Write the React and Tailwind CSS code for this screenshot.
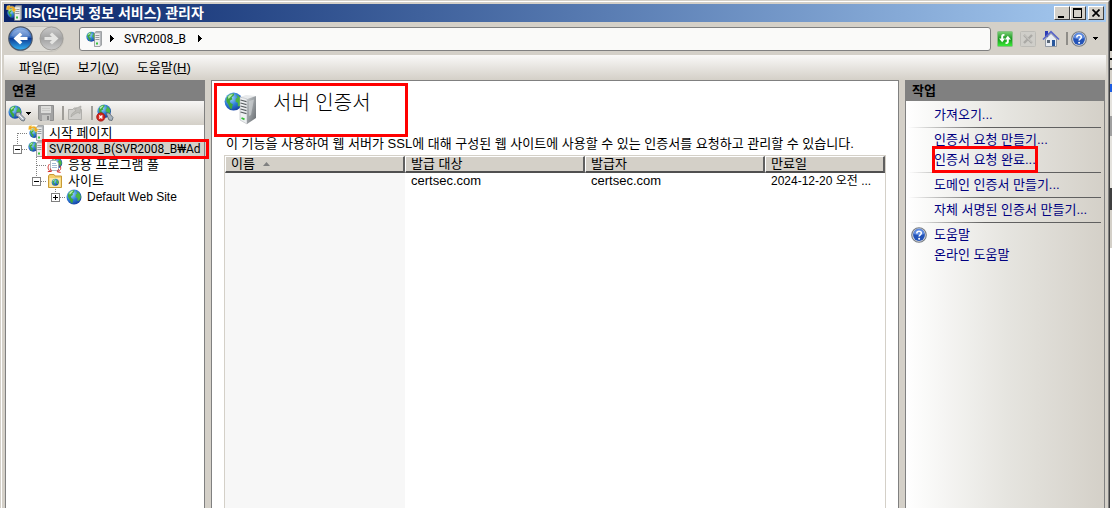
import React from 'react';

/* ---------- Icons ---------- */

const SvgDefs = () => (
    <svg width="0" height="0" className="absolute" aria-hidden="true">
        <defs>
            <radialGradient id="globeBlue" cx="0.35" cy="0.3" r="0.8">
                <stop offset="0" stopColor="#a6dcff" />
                <stop offset="0.5" stopColor="#2f7ed8" />
                <stop offset="1" stopColor="#10379a" />
            </radialGradient>
            <linearGradient id="towerSide" x1="0" y1="0" x2="1" y2="1">
                <stop offset="0" stopColor="#c4c8cb" />
                <stop offset="0.5" stopColor="#969b9f" />
                <stop offset="1" stopColor="#64696d" />
            </linearGradient>
            <linearGradient id="backBlue" x1="0" y1="0" x2="0" y2="1">
                <stop offset="0" stopColor="#8fb4ea" />
                <stop offset="0.45" stopColor="#2c62b8" />
                <stop offset="0.5" stopColor="#0b3c96" />
                <stop offset="1" stopColor="#35b4f4" />
            </linearGradient>
            <linearGradient id="forwardGray" x1="0" y1="0" x2="0" y2="1">
                <stop offset="0" stopColor="#c9c9c9" />
                <stop offset="0.5" stopColor="#a2a2a2" />
                <stop offset="1" stopColor="#cbcbcb" />
            </linearGradient>
            <linearGradient id="refreshGreen" x1="0" y1="0" x2="0" y2="1">
                <stop offset="0" stopColor="#7fd07a" />
                <stop offset="0.5" stopColor="#17961c" />
                <stop offset="1" stopColor="#3df03a" />
            </linearGradient>
        </defs>
    </svg>
);

// Drawn on a 16 unit grid, reused inside the bigger icons
const GlobeShape = () => (
    <g>
        <circle cx="8" cy="8" r="7.5" fill="url(#globeBlue)" />
        <path d="M3 3.5 C5 1.2 7.5 1 8.5 1.4 L8 3.2 L6.4 4.4 L7 6 L4.8 7.2 L5.4 9.2 L7.4 10.2 L6.2 14.6 C4.4 13.4 4.2 11 3 9.4 C1.6 8 1.6 5.4 3 3.5Z" fill="#3fa83c" />
        <path d="M10 2 C13.4 3.4 15 6 14.8 8.6 L13.2 11.6 L11.4 12 L11.6 9.2 L9.6 8 L9.8 5.6 L11.4 4.6Z" fill="#4cb545" />
        <path d="M3.2 4 C4.6 2 6.4 1.6 7.4 2 L5.6 4 L3.8 5.8Z" fill="#b5ecae" />
    </g>
);

const Globe = () => (
    <svg width="16" height="16" viewBox="0 0 16 16" className="shrink-0">
        <GlobeShape />
    </svg>
);

const LargeServerIcon = () => (
    <svg width="33" height="34" viewBox="0 0 33 34" className="shrink-0">
        <g transform="translate(0 1) scale(1.2)">
            <GlobeShape />
        </g>
        <path d="M16 6 L22 4 L32 5 L23 8Z" fill="#e8eaec" />
        <path d="M16 6 L23 8 L23 33 L16 29Z" fill="#eef0f2" stroke="#a9adb1" strokeWidth="0.5" />
        <path d="M23 8 L32 5 L32 27 L23 33Z" fill="url(#towerSide)" />
        <path d="M25 10 L30 8.4 L27 24 L25 25Z" fill="#d5d8da" opacity="0.6" />
        <path d="M16.5 9 L22.5 10.6 M16.5 12 L22.5 13.6 M16.5 15 L22.5 16.6 M16.5 18 L22.5 19.6 M16.5 21 L22.5 22.6" stroke="#5b6064" strokeWidth="1.1" />
        <path d="M17.5 27 L20.5 28.4" stroke="#35c03a" strokeWidth="1.8" />
    </svg>
);

// Front view tower for the 16px icons
const SmallTower = () => (
    <g>
        <path d="M8.5 2 L10 0.6 H15.5 V14 L14 15.5 H8.5Z" fill="#b4b7ba" stroke="#85898c" strokeWidth="0.7" />
        <rect x="9" y="2.4" width="4.8" height="12.6" fill="#eceeef" />
        <path d="M9.4 4.5 H13.4 M9.4 6.5 H13.4 M9.4 8.5 H13.4" stroke="#8c9195" strokeWidth="0.9" />
        <rect x="10" y="11.5" width="2" height="2" fill="#3bc43f" />
    </g>
);

const ServerIcon = () => (
    <svg width="16" height="16" viewBox="0 0 16 16" className="shrink-0">
        <g transform="translate(0 0.5) scale(0.66)">
            <GlobeShape />
        </g>
        <SmallTower />
    </svg>
);

const StartPageIcon = () => (
    <svg width="16" height="16" viewBox="0 0 16 16" className="shrink-0">
        <g transform="translate(1 3) scale(0.64)">
            <GlobeShape />
        </g>
        <SmallTower />
        <path d="M0.5 4.5 L1 1 L4 0.5 L3.4 1.8 C6 0.4 8.4 1.4 9 4 L10.6 4 L8 7.2 L5.2 4.4 L6.8 4.2 C6.2 3 5 2.8 3.6 3.6 L4 5Z" fill="#f0a81c" stroke="#fbe08a" strokeWidth="0.5" />
    </svg>
);

const ConnectIcon = () => (
    <svg width="18" height="18" viewBox="0 0 18 18">
        <g transform="translate(0 1) scale(0.88)">
            <GlobeShape />
        </g>
        <path d="M8 9 L11.5 8 L13 10.5 L17 14.5 L16 17 L13.5 16.5 L10 12.5 L8 12Z" fill="#b9c2cb" stroke="#56616c" strokeWidth="0.8" />
        <path d="M11 11 L15 15" stroke="#f4f6f8" strokeWidth="1" />
    </svg>
);

const DisconnectIcon = () => (
    <svg width="18" height="18" viewBox="0 0 18 18">
        <g transform="translate(1 0) scale(0.9)">
            <GlobeShape />
        </g>
        <path d="M10 9 L13 9 L17 13.5 L16 16.5 L13 16Z" fill="#aab4be" stroke="#56616c" strokeWidth="0.8" />
        <circle cx="4.8" cy="13" r="4.2" fill="#d3241c" stroke="#8f0d08" strokeWidth="0.6" />
        <path d="M3.2 11.4 L6.4 14.6 M6.4 11.4 L3.2 14.6" stroke="#fff" strokeWidth="1.4" />
    </svg>
);

const SaveIcon = () => (
    <svg width="16" height="16" viewBox="0 0 16 16">
        <path d="M0.5 0.5 H15.5 V15.5 H2 L0.5 14Z" fill="#a3a3a3" stroke="#8e8e8e" />
        <rect x="3" y="1" width="10" height="7" fill="#dcdcda" />
        <path d="M4 3.5 H12 M4 5.5 H12" stroke="#cacac8" />
        <rect x="4" y="10" width="8" height="6" fill="#c4c4c2" />
        <rect x="9" y="11" width="2" height="4" fill="#8a8a8a" />
    </svg>
);

const UpFolderIcon = () => (
    <svg width="16" height="16" viewBox="0 0 16 16">
        <path d="M1.5 4.5 H6 L7 3 H10 V4.5 H14.5 V14.5 H1.5Z" fill="#cfcecb" stroke="#b0afab" />
        <path d="M4 12 C4 9 6 7 9 6 L7.5 4 L14 1 L13 8.5 L11 7.5 C8 8.5 6 10 4 12Z" fill="#bdbcb8" stroke="#a3a29e" strokeWidth="0.6" />
    </svg>
);

const AppPoolIcon = () => (
    <svg width="16" height="16" viewBox="0 0 16 16" className="shrink-0">
        <g transform="translate(3.5 0) scale(0.76)">
            <GlobeShape />
        </g>
        <path d="M3.5 3.5 H9 L11.5 6 V13.5 H3.5Z" fill="#fff" stroke="#9aa3ad" strokeWidth="0.8" />
        <path d="M5 6.5 H9 M5 8.5 H10 M5 10.5 H10" stroke="#9db4cf" strokeWidth="0.9" />
        <path d="M2.6 7 C0.6 9 0.6 12 2.6 13.8 M0.8 14.6 L4.4 14.4 L3.4 11.6 M12.6 8.5 C14.4 10.5 14 13 11.4 14.4 M13.6 15.4 L10.2 14.8 L11.6 12.2" fill="none" stroke="#d22f2a" strokeWidth="1" />
    </svg>
);

const SitesIcon = () => (
    <svg width="16" height="16" viewBox="0 0 16 16" className="shrink-0">
        <path d="M1.5 3 L2.5 1.5 H7 L8 3 H14.5 V14.5 H1.5Z" fill="#f3cf6b" stroke="#c89a35" />
        <path d="M2.5 5 H13.5 V14 H2.5Z" fill="#fbe9a8" />
        <g transform="translate(4.5 5.5) scale(0.47)">
            <GlobeShape />
        </g>
    </svg>
);

const HelpIcon = () => (
    <svg width="16" height="16" viewBox="0 0 16 16" className="shrink-0">
        <circle cx="8" cy="8" r="7.3" fill="#dadde2" stroke="#777c84" strokeWidth="1.1" />
        <circle cx="8" cy="8" r="5.9" fill="#2353b8" />
        <path d="M2.6 7 A5.4 5.4 0 0 1 13.4 7 Q8 9 2.6 7Z" fill="#5f8be0" />
        <path d="M5.8 6.4 C5.8 3.4 10.4 3.6 10.3 6.2 C10.2 7.8 8.1 7.8 8.1 9.6" fill="none" stroke="#fff" strokeWidth="1.6" />
        <circle cx="8.1" cy="11.8" r="1" fill="#fff" />
    </svg>
);

const RefreshIcon = () => (
    <svg width="16" height="16" viewBox="0 0 16 16">
        <rect x="0.5" y="0.5" width="15" height="15" rx="1" fill="url(#refreshGreen)" stroke="#8bbf86" />
        <path d="M7.5 3 H6.4 C4.8 3 4.2 4 4.2 5.4 V7.5 H2 L5.2 11.2 L8.2 7.5 H6.2 V5.6 C6.2 5 6.5 4.8 7.5 4.8Z" fill="#fff" />
        <path d="M8.5 13 H9.6 C11.2 13 11.8 12 11.8 10.6 V8.5 H14 L10.8 4.8 L7.8 8.5 H9.8 V10.4 C9.8 11 9.5 11.2 8.5 11.2Z" fill="#fff" />
    </svg>
);

const StopIcon = () => (
    <svg width="16" height="16" viewBox="0 0 16 16">
        <rect x="0.5" y="0.5" width="15" height="15" rx="1" fill="#cfcec9" stroke="#bdbcb7" />
        <path d="M4 4 L12 12 M12 4 L4 12" stroke="#aaa9a5" strokeWidth="2.4" />
        <path d="M4.5 4 L12 11.5" stroke="#dddcd8" strokeWidth="0.8" />
    </svg>
);

const HomeIcon = () => (
    <svg width="18" height="18" viewBox="0 0 18 18">
        <rect x="3" y="1" width="3" height="6" fill="#2c3bb5" />
        <path d="M3.5 9 L9 3.5 L14.5 9 V16.5 H3.5Z" fill="#e9edf3" stroke="#7e8794" strokeWidth="0.8" />
        <path d="M1 9.5 L9 1.8 L17 9.5" fill="none" stroke="#5a67c9" strokeWidth="1.7" />
        <rect x="10" y="10" width="3" height="6" fill="#28579c" />
        <rect x="5" y="10" width="3" height="3" fill="#5b6878" />
    </svg>
);

const BackForward = () => (
    <span className="flex h-[26px] w-[56px] items-center justify-between rounded-full border border-[#c4c1ba] bg-[#dedcd6]">
        <button aria-label="뒤로" className="-ml-px">
            <svg width="25" height="25" viewBox="0 0 25 25">
                <circle cx="12.5" cy="12.5" r="11.7" fill="url(#backBlue)" stroke="#4a5668" strokeWidth="1.2" />
                <path d="M3 10 A10 9.5 0 0 1 22 10 Q12.5 14 3 10Z" fill="#fff" opacity="0.2" />
                <path d="M5.5 12.5 L12 6.5 L14.3 8.7 L12 11 H19.5 V14 H12 L14.3 16.3 L12 18.5Z" fill="#fff" />
            </svg>
        </button>
        <button aria-label="앞으로" className="-mr-px">
            <svg width="25" height="25" viewBox="0 0 25 25">
                <circle cx="12.5" cy="12.5" r="11.5" fill="url(#forwardGray)" stroke="#a19f9b" strokeWidth="1" />
                <path d="M19.5 12.5 L13 6.5 L10.7 8.7 L13 11 H5.5 V14 H13 L10.7 16.3 L13 18.5Z" fill="#e4e4e2" />
            </svg>
        </button>
    </span>
);

const ArrowRight = () => (
    <svg width="4" height="7" viewBox="0 0 4 7" shapeRendering="crispEdges">
        <path d="M0 0 L4 3.5 L0 7Z" fill="#000" />
    </svg>
);

const CaretDown = () => (
    <svg width="5" height="3" viewBox="0 0 5 3" shapeRendering="crispEdges">
        <path d="M0 0 H5 L2.5 3Z" fill="#000" />
    </svg>
);

/* ---------- Title bar ---------- */

const captionButton =
    'flex h-[14px] w-4 items-center justify-center border border-t-white border-l-white border-r-[#404040] border-b-[#404040] bg-[#d4d0c8]';

const TitleBar = () => (
    <header className="flex h-[18px] shrink-0 items-center bg-linear-to-r from-[#0a246a] to-[#a6caf0] px-0.5">
        <StartPageIcon />
        <h1 className="ml-0.5 flex-1 text-[14px] leading-[18px] font-bold whitespace-nowrap text-white">
            IIS(인터넷 정보 서비스) 관리자
        </h1>
        <button aria-label="최소화" className={captionButton}>
            <svg width="10" height="10" viewBox="0 0 10 10" shapeRendering="crispEdges">
                <rect x="1" y="8" width="6" height="2" />
            </svg>
        </button>
        <button aria-label="최대화" className={captionButton}>
            <svg width="10" height="10" viewBox="0 0 10 10" shapeRendering="crispEdges">
                <path d="M0 0 H9 V10 H0Z M1 2 V9 H8 V2Z" fillRule="evenodd" />
            </svg>
        </button>
        <button aria-label="닫기" className={`${captionButton} ml-0.5`}>
            <svg width="8" height="8" viewBox="0 0 8 8">
                <path d="M0.5 0.5 L7.5 7.5 M7.5 0.5 L0.5 7.5" stroke="#000" strokeWidth="1.7" />
            </svg>
        </button>
    </header>
);

/* ---------- Address bar and menu ---------- */

const AddressBar = () => (
    <div className="flex h-[33px] shrink-0 items-center pl-1">
        <BackForward />
        <nav aria-label="경로" className="ml-[15px] flex h-6 flex-1 items-center rounded-[3px] border border-[#808080] bg-[#fafaf9] pl-1.5">
            <ServerIcon />
            <span className="ml-2"><ArrowRight /></span>
            <a href="#" className="mr-3 ml-2.5 font-['Roboto',sans-serif] text-[12px]">SVR2008_B</a>
            <ArrowRight />
        </nav>
        <div className="flex items-center pr-2">
            <button aria-label="새로 고침" className="ml-1.5"><RefreshIcon /></button>
            <button aria-label="중지" className="ml-[7px]"><StopIcon /></button>
            <button aria-label="홈" className="ml-1.5"><HomeIcon /></button>
            <span className="ml-1.5 h-[13px] w-0.5 bg-[#8f8d88]" />
            <button aria-label="도움말" className="ml-[3px] flex items-center gap-1.5">
                <HelpIcon />
                <CaretDown />
            </button>
        </div>
    </div>
);

const MENUS = [
    { label: '파일', hotkey: 'F' },
    { label: '보기', hotkey: 'V' },
    { label: '도움말', hotkey: 'H' },
];

const MenuBar = () => (
    <div className="flex h-[25px] shrink-0 items-center gap-[18px] bg-linear-to-b from-[#faf9f8] to-[#d4d0c8] pl-[15px]">
        {MENUS.map((menu) => (
            <button key={menu.hotkey}>
                {menu.label}(<u>{menu.hotkey}</u>)
            </button>
        ))}
    </div>
);

/* ---------- Connections panel ---------- */

const PanelTitle = ({ children }) => (
    <h2 className="h-[21px] shrink-0 bg-[#808080] pl-1.5 text-[13px] leading-[21px] font-bold">{children}</h2>
);

const TREE = [
    { label: '시작 페이지', level: 0, icon: <StartPageIcon />, down: true },
    { label: 'SVR2008_B(SVR2008_B₩Ad', level: 0, icon: <ServerIcon />, up: true, box: 'minus', selected: true },
    { label: '응용 프로그램 풀', level: 1, icon: <AppPoolIcon />, up: true, down: true },
    { label: '사이트', level: 1, icon: <SitesIcon />, up: true, box: 'minus' },
    { label: 'Default Web Site', level: 2, icon: <Globe />, up: true, box: 'plus' },
];

const INDENT = ['pl-[7px]', 'pl-[26px]', 'pl-[45px]'];

const TreeLines = ({ up, down, box }) => (
    <svg width="15" height="16" viewBox="0 0 15 16" className="shrink-0" shapeRendering="crispEdges">
        <g stroke="#808080" strokeDasharray="1 1">
            {up && <path d="M4.5 0 V8" />}
            {down && <path d="M4.5 8 V16" />}
            <path d="M5 8.5 H15" />
        </g>
        {box && <rect x="0.5" y="4.5" width="8" height="8" fill="#fff" stroke="#808080" />}
        {box && <path d="M2 8.5 H7" stroke="#000" />}
        {box === 'plus' && <path d="M4.5 6 V11" stroke="#000" />}
    </svg>
);

const ToolSeparator = () => <span className="ml-2 h-[14px] w-0.5 bg-[#a09e99]" />;

const Connections = () => (
    <aside className="flex min-w-0 flex-col border-x border-[#808080] bg-white">
        <PanelTitle>연결</PanelTitle>
        <div className="flex h-6 shrink-0 items-center bg-linear-to-b from-[#f7f6f5] to-[#d4d0c8] pl-0.5">
            <button aria-label="연결 만들기" className="flex items-center"><ConnectIcon /><CaretDown /></button>
            <button aria-label="저장" className="ml-[7px]" disabled><SaveIcon /></button>
            <ToolSeparator />
            <button aria-label="위로" className="ml-[3px]" disabled><UpFolderIcon /></button>
            <ToolSeparator />
            <button aria-label="연결 끊기" className="ml-[3px]"><DisconnectIcon /></button>
        </div>
        <ul>
            {TREE.map((node) => (
                <li key={node.label} className={`flex h-4 items-center ${INDENT[node.level]}`}>
                    <TreeLines up={node.up} down={node.down} box={node.box} />
                    {node.icon}
                    {node.selected ? (
                        <a href="#" className="relative ml-[3px] min-w-0 flex-1 bg-[#d4d0c8] pl-0.5 font-['Roboto','Noto_Sans_CJK_KR',sans-serif] text-[12px] leading-4">
                            <span className="block overflow-hidden whitespace-nowrap">{node.label}</span>
                            <span className="absolute -inset-x-[5px] -inset-y-0.5 border-3 border-[#ff0000]" />
                        </a>
                    ) : (
                        <a href="#" className={`ml-[5px] leading-4 whitespace-nowrap ${node.level === 2 ? 'text-[12px]' : ''}`}>
                            {node.label}
                        </a>
                    )}
                </li>
            ))}
        </ul>
    </aside>
);

/* ---------- Certificate list ---------- */

const COLUMNS = ['이름', '발급 대상', '발급자', '만료일'];

const headerCell =
    'h-4 border-t border-l border-t-white border-l-white border-r-2 border-b-2 border-r-[#606060] border-b-[#505050] bg-[#d4d0c8] px-[5px] text-left leading-[14px] font-normal';

const Certificates = () => (
    <main className="flex min-w-0 flex-col border border-b-0 border-[#808080] bg-white px-3">
        <div className="relative flex h-[54px] items-center">
            <LargeServerIcon />
            <h2 className="mb-2.5 ml-4 text-[20px] leading-7 font-light">서버 인증서</h2>
            <span className="absolute top-0.5 -left-2.5 h-[54px] w-[194px] border-3 border-[#ff0000]" />
        </div>
        <p className="h-5 pt-px pl-0.5 leading-4 whitespace-nowrap">
            이 기능을 사용하여 웹 서버가 SSL에 대해 구성된 웹 사이트에 사용할 수 있는 인증서를 요청하고 관리할 수 있습니다.
        </p>
        <div className="flex flex-1 border border-b-0 border-[#d4d0c8]">
            <table className="w-full table-fixed border-separate border-spacing-0">
                <colgroup>
                    <col className="w-[180px]" />
                    <col className="w-[180px]" />
                    <col className="w-[180px]" />
                    <col />
                </colgroup>
                <thead>
                    <tr>
                        {COLUMNS.map((column, index) => (
                            <th key={column} className={headerCell}>
                                {column}
                                {index === 0 && (
                                    <svg width="7" height="4" viewBox="0 0 7 4" className="mb-0.5 ml-2 inline">
                                        <path d="M0 4 L3.5 0 L7 4Z" fill="#808080" />
                                    </svg>
                                )}
                            </th>
                        ))}
                    </tr>
                </thead>
                <tbody>
                    <tr className="h-4 leading-4">
                        <td className="bg-[#f7f7f7]" />
                        <td className="px-1.5">certsec.com</td>
                        <td className="px-1.5">certsec.com</td>
                        <td className="px-1.5 text-[12px] whitespace-nowrap">2024-12-20 오전 ...</td>
                    </tr>
                    <tr>
                        <td className="bg-[#f7f7f7]" />
                        <td colSpan={3} />
                    </tr>
                </tbody>
            </table>
        </div>
    </main>
);

/* ---------- Actions panel ---------- */

const ACTION_GROUPS = [
    [{ label: '가져오기...' }],
    [{ label: '인증서 요청 만들기...' }, { label: '인증서 요청 완료...', marked: true }],
    [{ label: '도메인 인증서 만들기...' }],
    [{ label: '자체 서명된 인증서 만들기...' }],
    [{ label: '도움말', icon: <HelpIcon /> }, { label: '온라인 도움말' }],
];

const Actions = () => (
    <aside className="flex min-w-0 flex-col border-x border-[#808080] bg-linear-to-r from-white via-[#e6e5e0] to-[#d4d0c8]">
        <PanelTitle>작업</PanelTitle>
        <div className="pt-1">
            {ACTION_GROUPS.map((group, index) => (
                <React.Fragment key={group[0].label}>
                    {index > 0 && (
                        <hr className="my-0.5 mr-[3px] ml-0.5 h-px border-0 bg-linear-to-r from-transparent to-[#606060] to-40%" />
                    )}
                    <ul>
                        {group.map((action) => (
                            <li key={action.label} className="flex h-5 items-center pl-[5px]">
                                <span className="w-[23px] shrink-0">{action.icon}</span>
                                <a href="#" className="relative whitespace-nowrap text-[#000080]">
                                    {action.label}
                                    {action.marked && (
                                        <span className="absolute -inset-x-0.5 -top-1.5 -bottom-[5px] border-3 border-[#ff0000]" />
                                    )}
                                </a>
                            </li>
                        ))}
                    </ul>
                </React.Fragment>
            ))}
        </div>
    </aside>
);

// Sliver of the windows that lie behind on the right
const DesktopEdge = () => (
    <div className="flex w-0.5 flex-col bg-white">
        <span className="h-[51px] bg-black" />
        <span className="h-[7px] bg-[#d4d0c8]" />
        <span className="h-0.5 bg-black" />
        <span className="h-2 bg-[#d4d0c8]" />
        <span className="h-0.5 bg-[#404040]" />
        <span className="h-[14px] bg-[#d4d0c8]" />
        <span className="h-2 bg-[#1c5ce0]" />
        <span className="h-6 bg-[#e4e2dd]" />
        <span className="h-5 bg-[#a0a0a0]" />
        <span className="h-[52px] bg-[#e4e2dd]" />
        <span className="h-[22px] bg-[#404040]" />
        <span className="h-[38px] bg-[#d4d0c8]" />
    </div>
);

export default function App() {
    return (
        <div className="flex h-screen overflow-hidden bg-[#d4d0c8] font-['Liberation_Sans','Noto_Sans_CJK_KR',sans-serif] text-[13px] leading-4 text-black">
            <SvgDefs />
            <div className="flex min-w-0 flex-1 border-t border-r border-l border-[#d4d0c8] border-r-[#404040]">
                <div className="flex min-w-0 flex-1 flex-col border-t border-r border-l border-t-white border-r-[#808080] border-l-white px-0.5 pt-0.5">
                    <TitleBar />
                    <AddressBar />
                    <MenuBar />
                    <div className="grid min-h-0 flex-1 grid-cols-[200px_minmax(0,1fr)_200px] gap-1.5 px-px">
                        <Connections />
                        <Certificates />
                        <Actions />
                    </div>
                </div>
            </div>
            <DesktopEdge />
        </div>
    );
}
